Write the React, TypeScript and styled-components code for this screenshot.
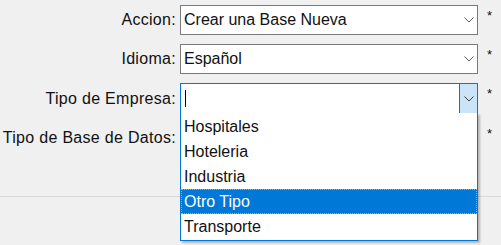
import styled, { createGlobalStyle } from 'styled-components';

const Global = createGlobalStyle`
  body {
    margin: 0;
    background: #f0f0f0;
    font-family: 'Liberation Sans', Arial, sans-serif;
    font-size: 16px;
    color: #111;
  }
`;

const Page = styled.div`
  width: 501px;
  height: 245px;
  overflow: hidden;
  position: relative;
`;

const Form = styled.div`
  display: grid;
  grid-template-columns: 176px 298px 23px;
  grid-template-rows: 30px 30px 31px 30px;
  column-gap: 4px;
  row-gap: 9px;
  padding-top: 5px;
  align-items: center;
`;

const Label = styled.div`
  text-align: right;
  white-space: nowrap;
  line-height: 20px;
  letter-spacing: 0.3px;
`;

const Select = styled.div<{ $focused?: boolean }>`
  position: relative;
  align-self: stretch;
  box-sizing: border-box;
  border: 1px solid ${(p) => (p.$focused ? '#0078d7' : '#7a7a7a')};
  background: #fff;
  display: flex;
  align-items: center;
  padding-left: 3px;
`;

const Value = styled.span`
  flex: 1;
  line-height: 20px;
  white-space: nowrap;
`;

const Caret = styled.span`
  width: 1px;
  height: 17px;
  background: #000;
  margin-left: 1px;
  flex: 1 0 auto;
  max-width: 1px;
`;

const Arrow = styled.div<{ $active?: boolean }>`
  width: 17px;
  align-self: stretch;
  display: flex;
  align-items: center;
  justify-content: center;
  background: ${(p) => (p.$active ? '#cce4f7' : 'transparent')};
  border-left: ${(p) => (p.$active ? '1px solid #0078d7' : 'none')};
  margin-left: auto;
`;

const Star = styled.div`
  font-size: 13px;
  padding-left: 5px;
  line-height: 14px;
  align-self: start;
  padding-top: 4px;
`;

const Separator = styled.div`
  position: absolute;
  left: 0;
  right: 0;
  top: 196px;
  height: 1px;
  background: #dadada;
`;

const List = styled.div`
  position: absolute;
  left: 180px;
  top: 113px;
  width: 298px;
  box-sizing: border-box;
  border: 1px solid #0078d7;
  border-top: none;
  background: #fff;
  box-shadow: 2px 2px 2px rgba(0, 0, 0, 0.25);
  padding: 1px 0 1px;
`;

const Item = styled.div<{ $selected?: boolean }>`
  height: 25px;
  box-sizing: border-box;
  line-height: 23px;
  padding-left: 2px;
  background: ${(p) => (p.$selected ? '#0078d7' : '#fff')};
  color: ${(p) => (p.$selected ? '#fff' : '#111')};
  border: 1px dotted ${(p) => (p.$selected ? '#e8a060' : 'transparent')};
`;

const Chevron = ({ color = '#606060' }: { color?: string }) => (
  <svg width="10" height="6" viewBox="0 0 10 6">
    <path d="M0.5 0.5 L5 5 L9.5 0.5" fill="none" stroke={color} strokeWidth="1" />
  </svg>
);

export default function App() {
  const items = ['Hospitales', 'Hoteleria', 'Industria', 'Otro Tipo', 'Transporte'];
  return (
    <Page>
      <Global />
      <Form>
        <Label>Accion:</Label>
        <Select>
          <Value>Crear una Base Nueva</Value>
          <Arrow>
            <Chevron />
          </Arrow>
        </Select>
        <Star>*</Star>

        <Label>Idioma:</Label>
        <Select>
          <Value>Español</Value>
          <Arrow>
            <Chevron />
          </Arrow>
        </Select>
        <Star>*</Star>

        <Label>Tipo de Empresa:</Label>
        <Select $focused>
          <Caret />
          <Arrow $active>
            <Chevron color="#404040" />
          </Arrow>
        </Select>
        <Star>*</Star>

        <Label>Tipo de Base de Datos:</Label>
        <Select>
          <Value />
          <Arrow>
            <Chevron />
          </Arrow>
        </Select>
        <Star>*</Star>
      </Form>
      <Separator />
      <List>
        {items.map((i) => (
          <Item key={i} $selected={i === 'Otro Tipo'}>
            {i}
          </Item>
        ))}
      </List>
    </Page>
  );
}
